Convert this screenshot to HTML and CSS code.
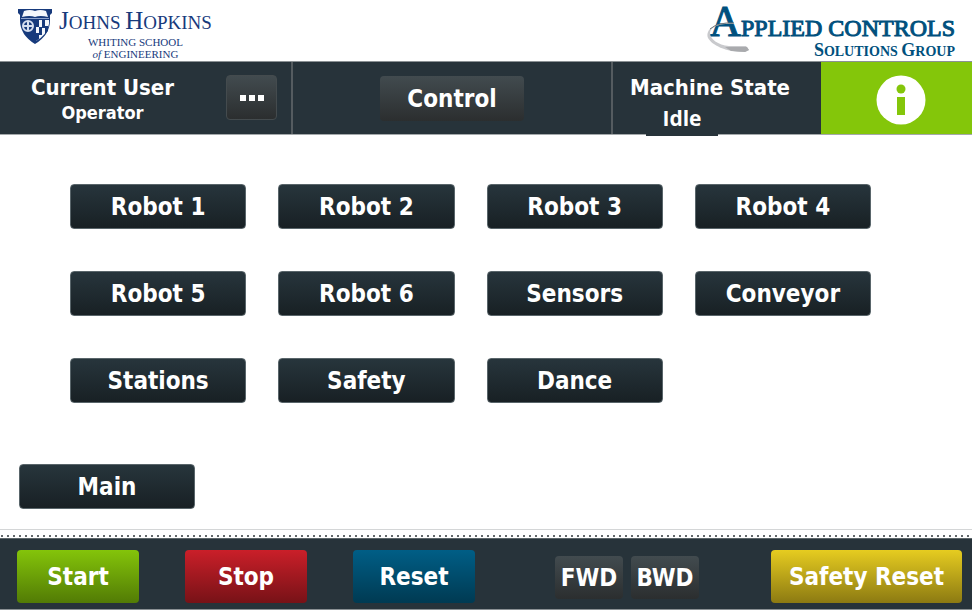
FILE: index.html
```html
<!DOCTYPE html>
<html lang="en">
<head>
<meta charset="utf-8">
<title>Control Panel</title>
<link rel="stylesheet" href="styles.css">
</head>
<body>
<header class="brands">
  <div class="jhu">
    <svg class="shield" viewBox="0 0 34 37" aria-hidden="true">
      <path d="M0 1H34V5L32 7V12Q32 27 17 36Q2 27 2 12V7L0 5Z" fill="#173a7c"/>
      <path d="M6 3Q12 1 17 3Q22 1 28 3L30 9Q22 7 17 9Q12 7 4 9Z" fill="#f4f7fc"/>
      <path d="M3 10.500H31" stroke="#8ea3cc"/>
      <path d="M18 12H31V16Q29 27 18 33Z" fill="#f4f7fc"/>
      <path d="M18 12h3v7h-3zM24 12h3v8h-3zM21 19h3v8h-3zM27 18h3v5l-3 3zM18 25h3v6l-3 2z" fill="#173a7c"/>
      <circle cx="10" cy="18" r="5" fill="none" stroke="#d5deef" stroke-width="2"/>
      <path d="M10 13V23M5 18H15" stroke="#d5deef" stroke-width="2"/>
    </svg>
    <div class="jhu-text">
      <div class="jhu-name"><span class="cap">J</span>OHNS <span class="cap">H</span>OPKINS</div>
      <div class="jhu-school">WHITING SCHOOL<br><i>of</i> ENGINEERING</div>
    </div>
  </div>
  <div class="acsg">
    <svg class="swoosh" viewBox="0 0 46 34" aria-hidden="true">
      <path d="M29 5C13 4 5 9 5 14C5 20 13 26 24 27L41 27L44 31L40 33C20 33 7 26 3 19C0 10 10 3 29 4Z" fill="#c9cacd"/>
      <path d="M20 28L42 28L44 31L40 33L26 32Z" fill="#a9aaad"/>
      <path d="M5 10Q13 3 29 4" fill="none" stroke="#6f7478" stroke-width="1"/>
    </svg>
    <div class="acsg-name"><span class="cap">A</span>PPLIED CONTROLS</div>
    <div class="acsg-group"><span class="cap">S</span>OLUTIONS <span class="cap">G</span>ROUP</div>
  </div>
</header>

<section class="status">
  <div class="cell user">
    <div class="user-text">
      <div class="label">Current User</div>
      <div class="name">Operator</div>
    </div>
    <button class="btn gray more" type="button" aria-label="More"><span class="dot"></span><span class="dot"></span><span class="dot"></span></button>
  </div>
  <div class="cell mode"><button class="btn gray control" type="button">Control</button></div>
  <div class="cell machine">
    <div class="label">Machine State</div>
    <div class="value">Idle</div>
  </div>
  <button class="info" type="button" aria-label="Information">
    <svg class="info-icon" viewBox="0 0 50 50" aria-hidden="true">
      <circle cx="25" cy="25" r="24.500" fill="#fff"/>
      <circle cx="25" cy="14" r="4.500" fill="#84c60a"/>
      <rect x="21" y="22" width="8" height="18" fill="#84c60a"/>
    </svg>
  </button>
</section>

<main class="screen">
  <nav class="pages">
    <button class="btn dark" type="button">Robot 1</button>
    <button class="btn dark" type="button">Robot 2</button>
    <button class="btn dark" type="button">Robot 3</button>
    <button class="btn dark" type="button">Robot 4</button>
    <button class="btn dark" type="button">Robot 5</button>
    <button class="btn dark" type="button">Robot 6</button>
    <button class="btn dark" type="button">Sensors</button>
    <button class="btn dark" type="button">Conveyor</button>
    <button class="btn dark" type="button">Stations</button>
    <button class="btn dark" type="button">Safety</button>
    <button class="btn dark" type="button">Dance</button>
  </nav>
  <button class="btn dark home" type="button">Main</button>
</main>

<div class="dots"></div>
<footer class="controls">
  <button class="btn action start" type="button">Start</button>
  <button class="btn action stop" type="button">Stop</button>
  <button class="btn action reset" type="button">Reset</button>
  <div class="jog">
    <button class="btn gray" type="button">FWD</button>
    <button class="btn gray" type="button">BWD</button>
  </div>
  <button class="btn action safety" type="button">Safety Reset</button>
</footer>
</body>
</html>
```
FILE: styles.css
```css
* { box-sizing: border-box; }

body {
  margin: 0;
  min-height: 100vh;
  display: flex;
  flex-direction: column;
  background: #fff;
  color: #fff;
  font-family: "DejaVu Sans Condensed", "Noto Sans", sans-serif;
  font-weight: 700;
  padding-bottom: 2px;
}

button { font: inherit; color: inherit; margin: 0; padding: 0; border: 0; cursor: pointer; }

/* Logos */
.brands {
  display: flex;
  justify-content: space-between;
  height: 61px;
  padding: 0 17px 0 18px;
  font-family: "Liberation Serif", serif;
  font-weight: 400;
  white-space: nowrap;
}
.jhu { display: flex; gap: 7px; padding-top: 8px; color: #173a7c; }
.shield { width: 34px; height: 37px; }
.jhu-name { font-size: 19px; line-height: 26px; }
.jhu-name .cap { font-size: 25px; }
.jhu-school { font-size: 11px; line-height: 12px; text-align: center; }
.acsg { position: relative; color: #00507d; text-align: right; }
.acsg-name { font-size: 24px; line-height: 44px; height: 42px; -webkit-text-stroke: 1px currentColor; }
.acsg-name .cap { font-size: 44px; }
.acsg-group { font-size: 14px; line-height: 16px; font-weight: 700; }
.acsg-group .cap { font-size: 18px; }
.swoosh { position: absolute; left: -4px; top: 19px; width: 46px; height: 34px; }

/* Status bar */
.status {
  display: grid;
  grid-template-columns: 293fr 320fr 208fr 151fr;
  height: 74px;
  background: #27333a;
  border-top: 1px solid #8b9194;
  border-bottom: 1px solid #a4a9ab;
}
.cell { height: 72px; border-right: 2px solid #555c60; }
.user { display: flex; justify-content: space-between; padding: 13px 14px 0 31px; }
.user-text { text-align: center; }
.label { font-size: 22px; line-height: 26px; }
.name { font-size: 18px; line-height: 24px; }
.mode { display: flex; justify-content: center; align-items: flex-start; padding-top: 14px; }
.machine { border-right: 0; padding: 13px 0 0 17px; }
.value {
  width: 72px;
  height: 35px;
  margin-left: 16px;
  background: #27333a;
  font-family: "Open Sans", sans-serif;
  font-size: 21px;
  line-height: 34px;
  text-align: center;
}
.info { display: flex; justify-content: center; background: #84c60a; padding: 13px 0 0 8px; }
.info-icon { width: 50px; height: 50px; }

/* Buttons */
.btn { height: 45px; border-radius: 4px; font-size: 24px; line-height: 40px; text-align: center; }
.dark { background: linear-gradient(#27353c, #182024); border: 1px solid #59656a; }
.gray { background: linear-gradient(#424b4f, #2b2e2f); }
.more {
  display: flex;
  justify-content: center;
  align-items: center;
  gap: 3px;
  width: 51px;
  border: 1px solid #444b4e;
}
.dot { width: 6px; height: 6px; background: #fff; }
.control { width: 144px; }

/* Screen */
.screen { flex: 1; padding: 49px 0 20px; }
.pages {
  display: grid;
  grid-template-columns: repeat(4, 1fr);
  gap: 42px 32px;
  padding: 0 101px 0 70px;
}
.home { width: 176px; margin: 61px 0 0 19px; }

/* Controls */
.dots {
  height: 9px;
  border-top: 1px solid #d4d6d7;
  background: linear-gradient(90deg, #fff 1px, #62686b 1px, #62686b 3px, #fff 3px) 0 5px / 6px 2px repeat-x;
}
.controls {
  display: flex;
  align-items: flex-start;
  gap: 46px;
  height: 72px;
  padding: 11px 10px 0 17px;
  background: #27333a;
  border-top: 1px solid #5d666a;
  border-bottom: 1px solid #8b9194;
}
.action { width: 122px; height: 53px; line-height: 50px; }
.start { background: linear-gradient(#84c40a, #527b05); }
.stop { background: linear-gradient(#ca1f29, #771217); }
.reset { background: linear-gradient(#005e86, #003a52); }
.safety { width: 191px; margin-left: auto; background: linear-gradient(#e6cc20, #8c7a12); }
.jog { display: flex; gap: 8px; margin-left: 34px; padding-top: 6px; }
.jog .btn { width: 68px; height: 43px; }
```
